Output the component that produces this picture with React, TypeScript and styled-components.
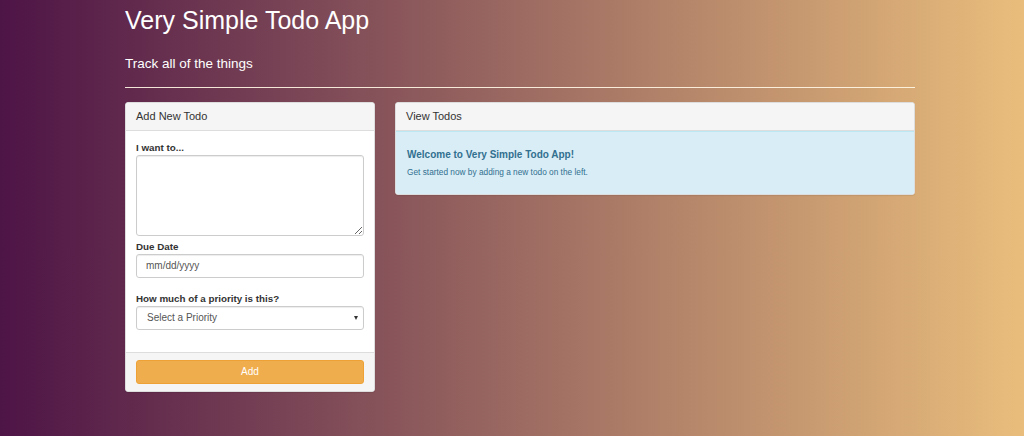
import React from "react";
import styled, { createGlobalStyle } from "styled-components";

const GlobalStyle = createGlobalStyle`
  html, body { margin: 0; padding: 0; }
  body {
    min-height: 436px;
    background: linear-gradient(to right, #4d1446 0%, #e9be7c 100%);
    font-family: "Liberation Sans", Arial, sans-serif;
    color: #333;
  }
  * { box-sizing: border-box; }
`;

const Page = styled.div`
  width: 790px;
  margin-left: 125px;
  padding-top: 7px;
  min-height: 436px;
`;

const Title = styled.h1`
  margin: 0;
  font-size: 25px;
  line-height: 27.5px;
  font-weight: 400;
  color: #fff;
`;

const Subtitle = styled.p`
  margin: 21px 0 0;
  font-size: 13.5px;
  line-height: 15px;
  color: #fff;
`;

const Rule = styled.hr`
  margin: 16px 0 0;
  border: 0;
  height: 1px;
  background: rgba(255, 246, 228, 0.92);
`;

const Columns = styled.div`
  display: grid;
  grid-template-columns: 250px 520px;
  column-gap: 20px;
  align-items: start;
  margin-top: 14px;
`;

const Panel = styled.section`
  background: #fff;
  border: 1px solid #ddd;
  border-radius: 3px;
  box-shadow: 0 1px 1px rgba(0, 0, 0, 0.08);
  overflow: hidden;
`;

const PanelHeading = styled.div`
  height: 28px;
  padding: 0 10px;
  display: flex;
  align-items: center;
  background: #f5f5f5;
  border-bottom: 1px solid #ddd;
  font-size: 11px;
  color: #333;
`;

const PanelBody = styled.div`
  padding: 11px 10px 22px;
  display: flex;
  flex-direction: column;
`;

const Label = styled.label`
  font-size: 9.8px;
  line-height: 12px;
  font-weight: 700;
  color: #333;
  margin-bottom: 1px;
`;

const Group = styled.div<{ $gap: number }>`
  display: flex;
  flex-direction: column;
  margin-top: ${(p) => p.$gap}px;
`;

const fieldBase = `
  width: 100%;
  border: 1px solid #ccc;
  border-radius: 3px;
  background: #fff;
  box-shadow: inset 0 1px 1px rgba(0, 0, 0, 0.075);
  font-family: "Liberation Sans", Arial, sans-serif;
  font-size: 10px;
  color: #555;
  outline: none;
`;

const TextArea = styled.textarea`
  ${fieldBase}
  height: 81px;
  padding: 5px 9px;
  display: block;
  margin: 0;
`;

const TextInput = styled.input`
  ${fieldBase}
  height: 24px;
  padding: 0 9px;
  margin: 0;
  &::placeholder { color: #555; opacity: 1; }
`;

const SelectWrap = styled.div`
  position: relative;
`;

const Select = styled.select`
  ${fieldBase}
  height: 24px;
  padding: 0 20px 0 10px;
  margin: 0;
  appearance: none;
  -webkit-appearance: none;
`;

const Caret = styled.span`
  position: absolute;
  right: 6px;
  top: 10px;
  width: 0;
  height: 0;
  border-left: 2.5px solid transparent;
  border-right: 2.5px solid transparent;
  border-top: 4px solid #333;
  pointer-events: none;
`;

const PanelFooter = styled.div`
  background: #f5f5f5;
  border-top: 1px solid #ddd;
  padding: 7px 10px 7px;
`;

const AddButton = styled.button`
  width: 100%;
  height: 24px;
  border: 1px solid #eea236;
  border-radius: 3px;
  background: #f0ad4e;
  color: #fff;
  font-family: "Liberation Sans", Arial, sans-serif;
  font-size: 10px;
  cursor: pointer;
`;

const InfoBody = styled.div`
  background: #d9edf7;
  border-top: 1px solid #bce8f1;
  padding: 16px 11px 16px;
  color: #31708f;
`;

const InfoTitle = styled.div`
  font-size: 10px;
  line-height: 14px;
  font-weight: 700;
`;

const InfoText = styled.div`
  margin-top: 4px;
  font-size: 8.3px;
  line-height: 12px;
`;

export default function App() {
  return (
    <>
      <GlobalStyle />
      <Page>
        <Title>Very Simple Todo App</Title>
        <Subtitle>Track all of the things</Subtitle>
        <Rule />
        <Columns>
          <Panel>
            <PanelHeading>Add New Todo</PanelHeading>
            <PanelBody>
              <Group $gap={0}>
                <Label>I want to...</Label>
                <TextArea />
              </Group>
              <Group $gap={5}>
                <Label>Due Date</Label>
                <TextInput type="text" placeholder="mm/dd/yyyy" />
              </Group>
              <Group $gap={15}>
                <Label>How much of a priority is this?</Label>
                <SelectWrap>
                  <Select defaultValue="">
                    <option value="">Select a Priority</option>
                    <option value="1">Low Priority</option>
                    <option value="2">Medium Priority</option>
                    <option value="3">High Priority</option>
                  </Select>
                  <Caret />
                </SelectWrap>
              </Group>
            </PanelBody>
            <PanelFooter>
              <AddButton type="button">Add</AddButton>
            </PanelFooter>
          </Panel>
          <Panel>
            <PanelHeading>View Todos</PanelHeading>
            <InfoBody>
              <InfoTitle>Welcome to Very Simple Todo App!</InfoTitle>
              <InfoText>Get started now by adding a new todo on the left.</InfoText>
            </InfoBody>
          </Panel>
        </Columns>
      </Page>
    </>
  );
}
